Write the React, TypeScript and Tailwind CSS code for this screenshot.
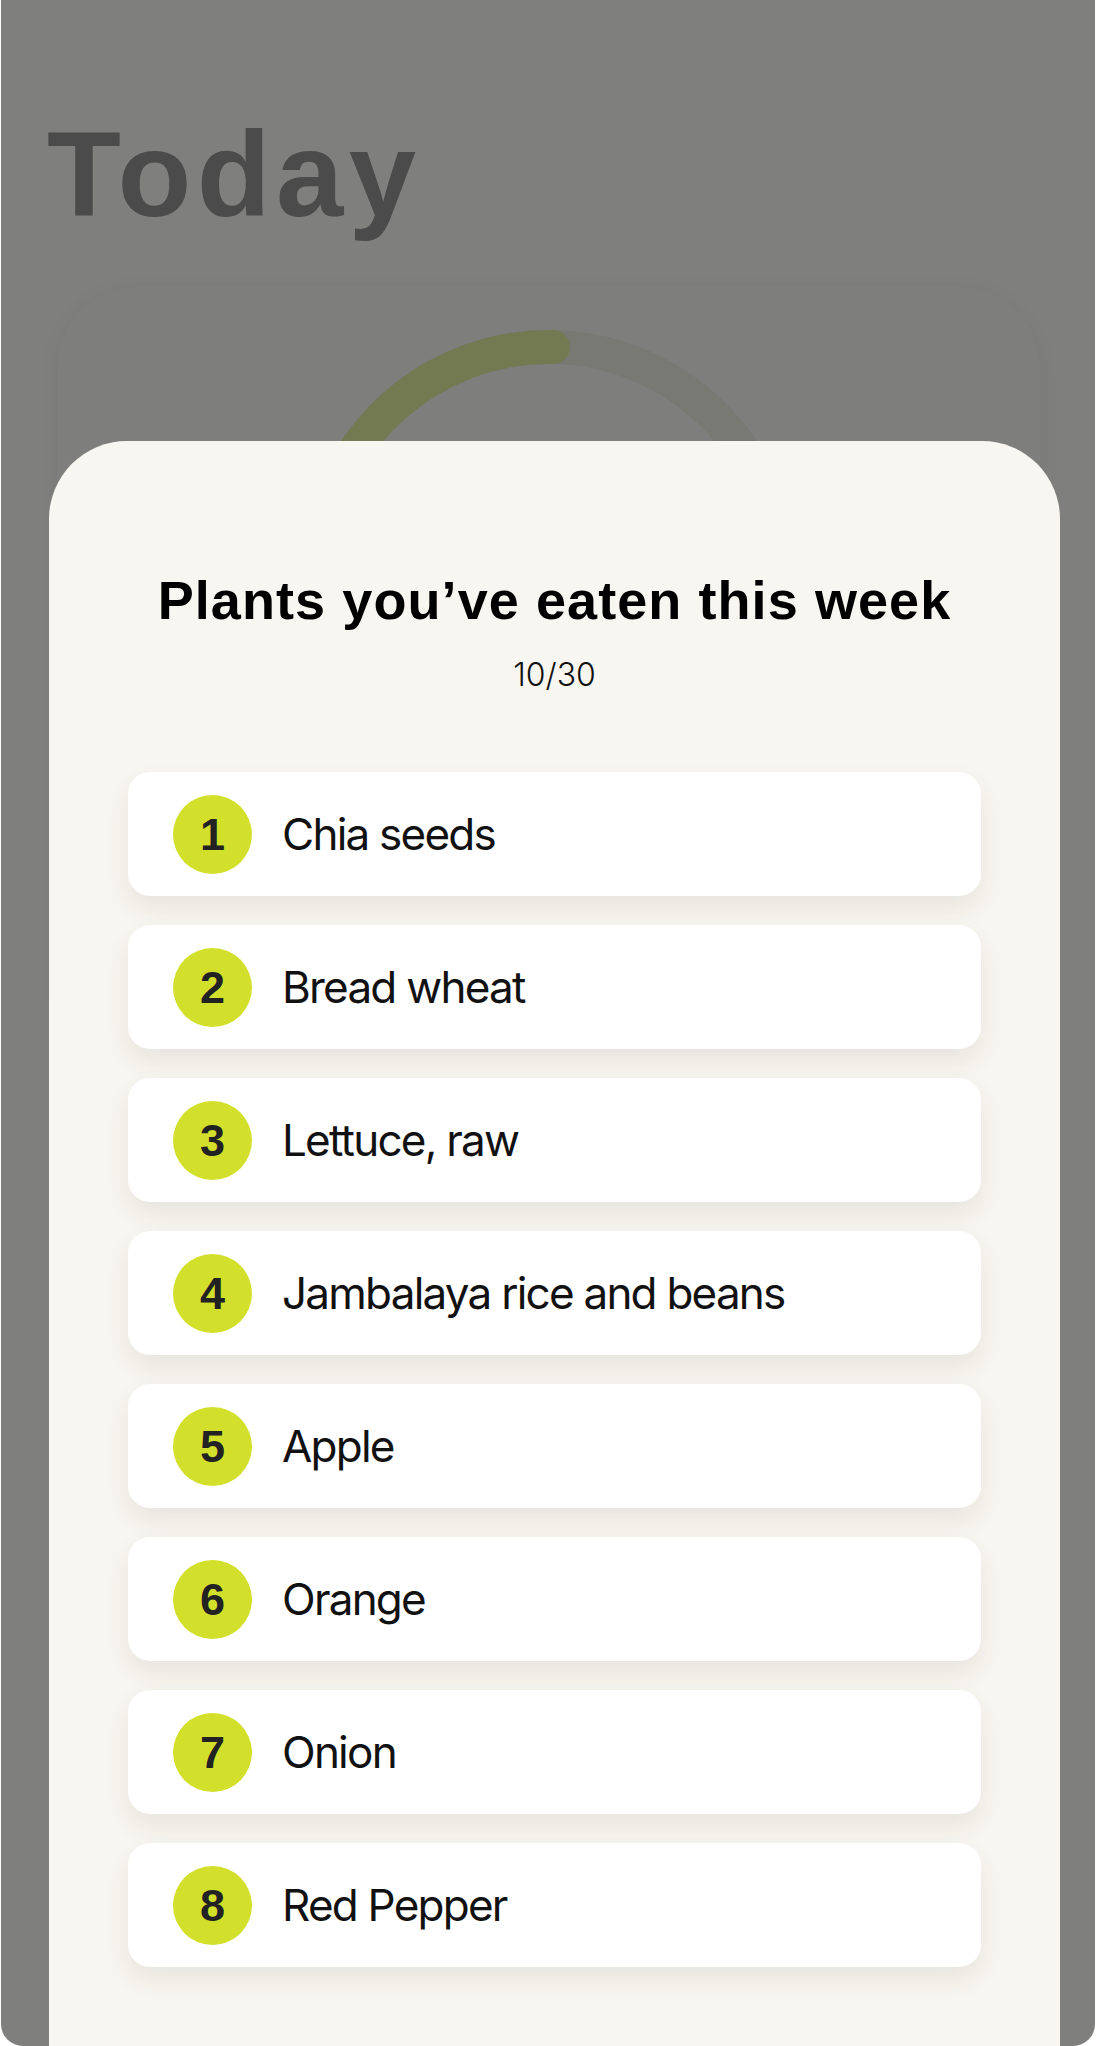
import React from 'react';

interface Plant {
  id: number;
  name: string;
}

const plants: Plant[] = [
  { id: 1, name: 'Chia seeds' },
  { id: 2, name: 'Bread wheat' },
  { id: 3, name: 'Lettuce, raw' },
  { id: 4, name: 'Jambalaya rice and beans' },
  { id: 5, name: 'Apple' },
  { id: 6, name: 'Orange' },
  { id: 7, name: 'Onion' },
  { id: 8, name: 'Red Pepper' },
];

function ProgressRing() {
  // dimmed ring behind the sheet, 10/30 done
  return (
    <svg width="500" height="500" viewBox="0 0 500 500" className="mx-auto">
      <circle cx="250" cy="250" r="233" fill="none" stroke="#797973" strokeWidth="34" />
      <path
        d="M85.25 414.75 A233 233 0 0 1 254.07 17.04"
        fill="none"
        stroke="#737a52"
        strokeWidth="34"
        strokeLinecap="round"
      />
    </svg>
  );
}

function PlantRow({ plant }: { plant: Plant }) {
  return (
    <div className="h-[124px] flex items-center pl-[45px] bg-white rounded-[22px] shadow-[0_12px_26px_rgba(60,50,30,0.09)]">
      <div className="w-[79px] h-[79px] shrink-0 rounded-full bg-[#d3e02b] flex items-center justify-center">
        <span className="font-['Liberation_Sans',sans-serif] font-bold text-[45px] leading-none text-[#222222]">
          {plant.id}
        </span>
      </div>
      <span className="ml-[30px] font-['Inter',sans-serif] text-[44px] leading-none text-[#111111] tracking-[-0.04em]">
        {plant.name}
      </span>
    </div>
  );
}

export default function App() {
  return (
    <div className="relative w-[1098px] h-[2046px] bg-white overflow-hidden">
      <div className="ml-[1px] w-[1094px] h-full bg-[#7f7f7e] rounded-b-[22px] flex flex-col">
        <h1 className="pt-[114px] pl-[46px] font-['Liberation_Sans',sans-serif] font-bold text-[121px] leading-none tracking-[0.045em] text-[#4b4b4b]">
          Today
        </h1>
        <div className="mt-[52px] ml-[56px] w-[983px] h-[760px] rounded-[80px] bg-[#7e7e7d] shadow-[0_4px_20px_rgba(0,0,0,0.06)] pt-[43px]">
          <ProgressRing />
        </div>
      </div>

      <div className="absolute left-[49px] top-[441px] w-[1011px] bottom-0 bg-[#f8f6f0] rounded-t-[78px] flex flex-col items-center">
        <h2 className="pt-[132px] font-['Liberation_Sans',sans-serif] font-bold text-[54px] leading-none tracking-[0.02em] text-black">
          Plants you’ve eaten this week
        </h2>
        <p className="mt-[32px] font-['Inter',sans-serif] font-light text-[32px] leading-none text-[#111111]">
          10/30
        </p>
        <div className="mt-[81px] w-full px-[79px] flex flex-col gap-[29px]">
          {plants.map((p) => (
            <PlantRow key={p.id} plant={p} />
          ))}
        </div>
      </div>
    </div>
  );
}
